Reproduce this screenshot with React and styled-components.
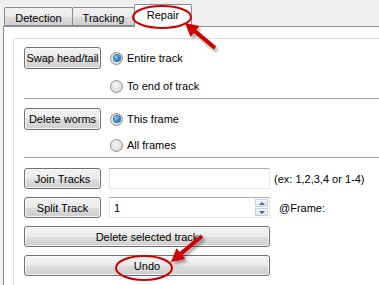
import React from "react";
import styled, { createGlobalStyle } from "styled-components";

const GlobalStyle = createGlobalStyle`
  html, body {
    margin: 0;
    padding: 0;
    background: #f0f0f0;
  }
  body {
    font-family: "Liberation Sans", Arial, sans-serif;
    font-size: 11px;
    color: #000;
  }
`;

const Window = styled.div`
  position: relative;
  width: 379px;
  height: 285px;
  overflow: hidden;
  background: #f0f0f0;
`;

const TabBar = styled.div`
  display: flex;
  align-items: flex-end;
  height: 26px;
  padding-left: 4px;
  position: relative;
  z-index: 1;
`;

const Tab = styled.div`
  box-sizing: border-box;
  width: ${({ $w }) => $w}px;
  height: ${({ $active }) => ($active ? 23 : 19)}px;
  margin-bottom: ${({ $active }) => ($active ? -1 : 0)}px;
  margin-left: ${({ $first }) => ($first ? 0 : -1)}px;
  border: 1px solid #898c95;
  border-bottom: ${({ $active }) => ($active ? "none" : "1px solid #898c95")};
  border-radius: 2px 2px 0 0;
  background: ${({ $active }) =>
    $active ? "#fff" : "linear-gradient(#f2f2f2 0%, #ebebeb 50%, #dddddd 51%, #cfcfcf 100%)"};
  display: flex;
  align-items: center;
  justify-content: center;
  padding-top: ${({ $active }) => ($active ? 0 : 2)}px;
  padding-bottom: ${({ $active }) => ($active ? 2 : 0)}px;
`;

const Pane = styled.div`
  box-sizing: border-box;
  height: 259px;
  margin-left: 3px;
  background: #fff;
  border-top: 1px solid #898c95;
  border-left: 1px solid #898c95;
  padding: 11px 0 0 9px;
`;

const GroupBox = styled.div`
  box-sizing: border-box;
  height: 260px;
  border: 1px solid #d5dfe5;
  border-right: none;
  border-radius: 3px 0 0 3px;
  padding-left: 10px;
`;

const Section = styled.div`
  display: grid;
  grid-template-columns: 77px 1fr;
  column-gap: 8px;
  align-items: center;
  padding: ${({ $pad }) => $pad};
  border-bottom: ${({ $sep }) => ($sep ? "1px solid #a0a0a0" : "none")};
`;

const Button = styled.button`
  box-sizing: border-box;
  height: ${({ $h }) => $h || 21}px;
  width: ${({ $w }) => ($w ? `${$w}px` : "100%")};
  padding: 0;
  border: 1px solid #707070;
  border-radius: 3px;
  background: linear-gradient(#f2f2f2 0%, #ebebeb 50%, #dddddd 51%, #cfcfcf 100%);
  box-shadow: inset 0 0 0 1px rgba(255, 255, 255, 0.7);
  font-family: inherit;
  font-size: 11px;
  color: #000;
  white-space: nowrap;
`;

const Radio = styled.label`
  display: flex;
  align-items: center;
  gap: 4px;
  height: 20px;
  grid-column: 2;
  margin-top: ${({ $mt }) => $mt || 0}px;
  margin-left: 1px;
`;

const Dot = styled.span`
  box-sizing: border-box;
  width: 13px;
  height: 13px;
  border-radius: 50%;
  border: 1px solid #8e8f8f;
  background: radial-gradient(circle at 40% 40%, #f4f4f4 0%, #dcdcdc 70%, #c9c9c9 100%);
  display: flex;
  align-items: center;
  justify-content: center;
  &::after {
    content: "";
    width: 6px;
    height: 6px;
    border-radius: 50%;
    display: ${({ $on }) => ($on ? "block" : "none")};
    background: radial-gradient(circle at 35% 35%, #8fd0f8 0%, #1a6fbf 70%, #134b8c 100%);
    box-shadow: 0 0 0 1px #3a6e9e;
  }
`;

const Lower = styled.div`
  display: grid;
  grid-template-columns: 77px 161px auto;
  column-gap: 8px;
  row-gap: 8px;
  align-items: center;
  padding-top: 10px;
`;

const TextBox = styled.div`
  box-sizing: border-box;
  position: relative;
  height: 21px;
  border: 1px solid #e3e9ef;
  border-top-color: #abadb3;
  border-left-color: #e2e3ea;
  background: #fff;
  display: flex;
  align-items: center;
  padding-left: 4px;
`;

const Spin = styled.div`
  position: absolute;
  right: 1px;
  top: 1px;
  bottom: 1px;
  width: 13px;
  display: flex;
  flex-direction: column;
  gap: 1px;
`;

const SpinHalf = styled.div`
  flex: 1;
  box-sizing: border-box;
  border: 1px solid #c5d2df;
  background: linear-gradient(#f5f8fb, #dfe7ef);
  display: flex;
  align-items: center;
  justify-content: center;
  &::after {
    content: "";
    border-left: 3px solid transparent;
    border-right: 3px solid transparent;
    ${({ $up }) => ($up ? "border-bottom: 3px solid #4d6185;" : "border-top: 3px solid #4d6185;")}
  }
`;

const Hint = styled.span`
  margin-left: ${({ $ml }) => $ml || 0}px;
  white-space: nowrap;
`;

const Wide = styled.div`
  grid-column: 1 / 3;
`;

const Overlay = styled.svg`
  position: absolute;
  inset: 0;
  pointer-events: none;
  z-index: 5;
`;

function Arrow({ x1, y1, x2, y2 }) {
  const a = Math.atan2(y2 - y1, x2 - x1);
  const len = 13;
  const w = 7;
  const bx = x2 - len * Math.cos(a);
  const by = y2 - len * Math.sin(a);
  const px = -Math.sin(a) * w;
  const py = Math.cos(a) * w;
  const head = `${x2},${y2} ${bx + px},${by + py} ${bx - px},${by - py}`;
  return (
    <g filter="url(#shadow)">
      <line x1={x1} y1={y1} x2={bx} y2={by} stroke="#cc0000" strokeWidth="4" />
      <polygon points={head} fill="#cc0000" />
    </g>
  );
}

export default function App() {
  return (
    <Window>
      <GlobalStyle />
      <TabBar>
        <Tab $first $w={69}>Detection</Tab>
        <Tab $w={63}>Tracking</Tab>
        <Tab $active $w={58}>Repair</Tab>
      </TabBar>
      <Pane>
        <GroupBox>
          <Section $sep $pad="8px 0 2px 0">
            <Button $h={22}>Swap head/tail</Button>
            <Radio>
              <Dot $on />
              Entire track
            </Radio>
            <Radio $mt={7}>
              <Dot />
              To end of track
            </Radio>
          </Section>
          <Section $sep $pad="9px 0 2px 0">
            <Button $h={22}>Delete worms</Button>
            <Radio>
              <Dot $on />
              This frame
            </Radio>
            <Radio $mt={5}>
              <Dot />
              All frames
            </Radio>
          </Section>
          <Lower>
            <Button>Join Tracks</Button>
            <TextBox />
            <Hint $ml={-4}>(ex: 1,2,3,4 or 1-4)</Hint>
            <Button>Split Track</Button>
            <TextBox>
              1
              <Spin>
                <SpinHalf $up />
                <SpinHalf />
              </Spin>
            </TextBox>
            <Hint $ml={1}>@Frame:</Hint>
            <Wide>
              <Button>Delete selected track</Button>
            </Wide>
            <Wide>
              <Button>Undo</Button>
            </Wide>
          </Lower>
        </GroupBox>
      </Pane>
      <Overlay width="379" height="285" viewBox="0 0 379 285">
        <defs>
          <filter id="shadow" x="-50%" y="-50%" width="200%" height="200%">
            <feDropShadow dx="2" dy="3" stdDeviation="1.5" floodColor="#000" floodOpacity="0.35" />
          </filter>
        </defs>
        <ellipse cx="162" cy="17" rx="29" ry="11" fill="none" stroke="#cc0000" strokeWidth="2" />
        <Arrow x1={215} y1={48} x2={185} y2={23} />
        <ellipse cx="144" cy="268" rx="28" ry="12" fill="none" stroke="#cc0000" strokeWidth="2" />
        <Arrow x1={202} y1={236} x2={171} y2={262} />
      </Overlay>
    </Window>
  );
}
